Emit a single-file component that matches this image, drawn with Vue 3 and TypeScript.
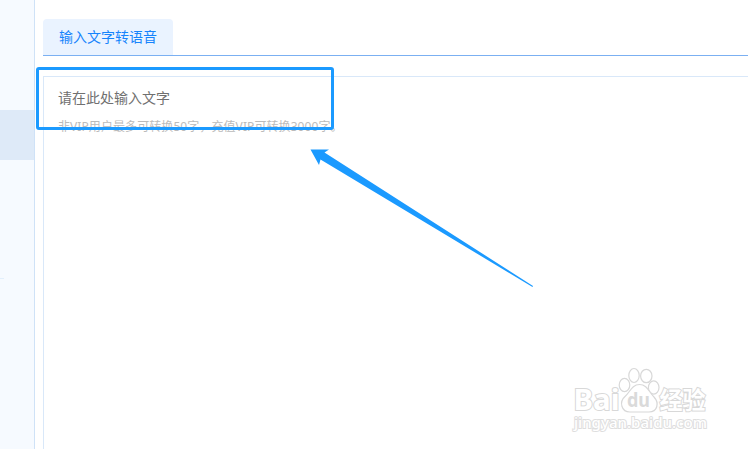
<script setup lang="ts">
import {ref} from "vue";

const tabs = ref<string[]>(["输入文字转语音"]);
const activeTab = ref(0);
</script>

<template>
    <div class="page">
        <aside class="sidebar">
            <div class="sidebar-active"></div>
            <div class="sidebar-divider"></div>
        </aside>

        <main class="content">
            <nav class="tabs">
                <button
                    v-for="(tab, index) in tabs"
                    :key="index"
                    :class="{ active: index === activeTab }"
                    @click="activeTab = index"
                >{{ tab }}</button>
            </nav>

            <section class="editor">
                <p class="placeholder">请在此处输入文字</p>
                <p class="hint">非VIP用户最多可转换50字，充值VIP可转换3000字。</p>
            </section>
        </main>

        <!-- Annotations -->
        <div class="highlight"></div>
        <svg class="arrow" width="226" height="142" viewBox="0 0 226 142">
            <path d="M1.500 1.500 L20 1.500 L15.500 4.500 L224 138 L223.500 139 L11.500 11.500 L10 17 Z" fill="#1b9aff" />
        </svg>

        <svg class="watermark" width="148" height="74" viewBox="0 0 148 74">
            <g fill="#fff" stroke="#d8d8d8" stroke-width="1.200">
                <ellipse cx="55.500" cy="20" rx="5.300" ry="6.700" />
                <ellipse cx="65" cy="10.500" rx="5.200" ry="7" />
                <ellipse cx="77.300" cy="11" rx="5.700" ry="6.700" />
                <ellipse cx="84.700" cy="22.500" rx="5.300" ry="6.700" />
                <path d="M70.500 19.500 C63 19.500 61 27 56.500 31 C49.500 37 52.500 47 61 47 C66 47 75 47 80 47 C88.500 47 90.500 38 85 32 C80 27 78 19.500 70.500 19.500 Z" />
            </g>
            <g class="logo-text">
                <text x="4.500" y="45" textLength="46" lengthAdjust="spacingAndGlyphs" font-size="29">Bai</text>
                <text class="du" x="58" y="42" textLength="23" lengthAdjust="spacingAndGlyphs" font-size="19">du</text>
                <text x="90.500" y="44" textLength="46" lengthAdjust="spacingAndGlyphs" font-size="24">经验</text>
                <text class="site" x="5" y="63" textLength="133" lengthAdjust="spacingAndGlyphs" font-size="15">jingyan.baidu.com</text>
            </g>
        </svg>
    </div>
</template>

<style>
body {
    margin: 0;
    overflow: hidden;
}
</style>

<style scoped>
.page {
    position: relative;
    display: flex;
    width: 748px;
    height: 449px;
    overflow: hidden;
    background: #fff;
    font-family: "Liberation Sans", "Noto Sans CJK SC", sans-serif;
}

.sidebar {
    box-sizing: border-box;
    width: 35px;
    padding-top: 110px;
    background: #f6faff;
    border-right: 1px solid #cfe2f7;
}

.sidebar-active {
    height: 50px;
    background: #deeaf8;
}

.sidebar-divider {
    width: 4px;
    height: 1px;
    margin-top: 118px;
    background: #e2effc;
}

.content {
    display: flex;
    flex: 1;
    flex-direction: column;
    padding: 19px 0 0 8px;
}

.tabs {
    display: flex;
    height: 36px;
    border-bottom: 1px solid #7bb0f2;
}

.tabs button {
    width: 130px;
    padding: 0;
    border: none;
    border-radius: 4px 4px 0 0;
    background: transparent;
    color: #1684fc;
    font-family: inherit;
    font-size: 14px;
    line-height: 36px;
    cursor: pointer;
}

.tabs button.active {
    background: #eaf3ff;
}

.editor {
    flex: 1;
    margin-top: 20px;
    padding: 11px 14px;
    border-top: 1px solid #d9e8f9;
    border-left: 1px solid #d9e8f9;
}

.editor p {
    margin: 0;
    white-space: nowrap;
}

.editor .placeholder {
    color: #707070;
    font-size: 14px;
    line-height: 20px;
}

.editor .hint {
    margin-top: 10px;
    color: #bbb;
    font-family: "Noto Sans", "Noto Sans CJK SC", sans-serif;
    font-size: 12px;
    line-height: 18px;
    letter-spacing: 0.080px;
}

.highlight {
    position: absolute;
    top: 67px;
    left: 36px;
    box-sizing: border-box;
    width: 298px;
    height: 63px;
    border: 3px solid #1b9aff;
    border-radius: 3px;
}

.arrow {
    position: absolute;
    top: 148px;
    left: 309px;
}

.watermark {
    position: absolute;
    top: 365px;
    left: 569px;
}

.logo-text {
    fill: #fff;
    stroke: #d8d8d8;
    stroke-width: 2px;
    paint-order: stroke;
    font-family: "Noto Sans", "Noto Sans CJK SC", sans-serif;
    font-weight: bold;
}

.logo-text .du {
    fill: #dadada;
    stroke: none;
}

.logo-text .site {
    stroke: #dedede;
    stroke-width: 2px;
    font-weight: 500;
}
</style>
